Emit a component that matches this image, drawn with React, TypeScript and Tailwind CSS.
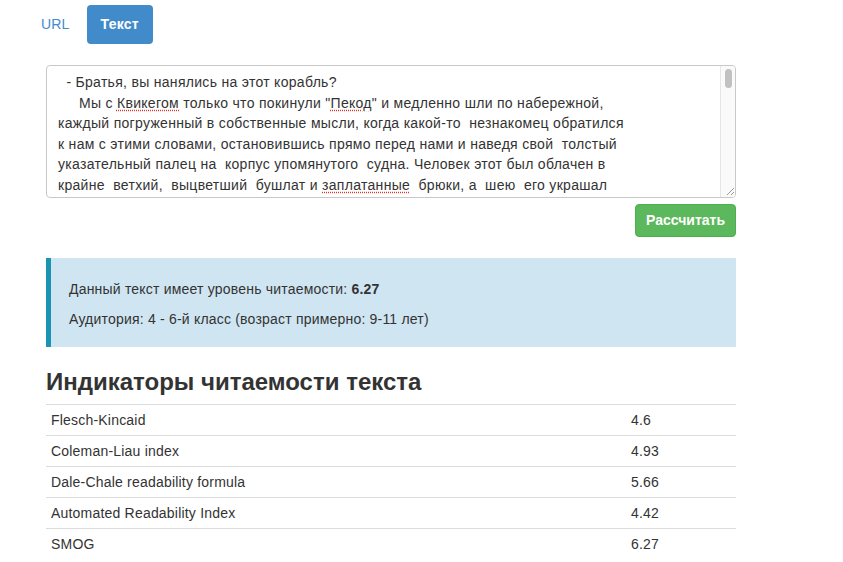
const lines = [
  "  - Братья, вы нанялись на этот корабль?",
  "     Мы с Квикегом только что покинули \"Пекод\" и медленно шли по набережной,",
  "каждый погруженный в собственные мысли, когда какой-то  незнакомец обратился",
  "к нам с этими словами, остановившись прямо перед нами и наведя свой  толстый",
  "указательный палец на  корпус упомянутого  судна. Человек этот был облачен в",
  "крайне  ветхий,  выцветший  бушлат и заплатанные  брюки, а  шею  его украшал",
  "обрывок черного платка. Он был рябой от оспы, а на лице",
];

const misspelled = ["Квикегом", "Пекод", "заплатанные"];

const renderLine = (line: string) => {
  const parts = line.split(/(Квикегом|Пекод|заплатанные)/);
  return parts.map((p, i) =>
    misspelled.includes(p) ? (
      <span key={i} className="underline decoration-dotted decoration-[#e0302a] underline-offset-2">
        {p}
      </span>
    ) : (
      <span key={i}>{p}</span>
    )
  );
};

const indicators = [
  { name: "Flesch-Kincaid", value: "4.6" },
  { name: "Coleman-Liau index", value: "4.93" },
  { name: "Dale-Chale readability formula", value: "5.66" },
  { name: "Automated Readability Index", value: "4.42" },
  { name: "SMOG", value: "6.27" },
];

const App = () => {
  return (
    <div
      className="w-[843px] h-[562px] overflow-hidden bg-white text-[#333] text-[14px] tracking-[0.2px]"
      style={{ fontFamily: '"Liberation Sans", Arial, sans-serif' }}
    >
      <ul className="flex pl-[26px] pt-[5px]">
        <li>
          <a className="block px-[15px] h-[39px] leading-[39px] text-[#428bca] rounded">URL</a>
        </li>
        <li className="ml-[2px]">
          <a className="block px-[14px] h-[39px] leading-[39px] bg-[#428bca] text-white font-bold rounded">
            Текст
          </a>
        </li>
      </ul>

      <div className="ml-[46px] w-[690px]">
        <div className="mt-[21px] h-[133px] border border-[#c8c8c8] rounded-[4px] flex overflow-hidden">
          <div className="flex-1 pl-[11px] pt-[6px] overflow-hidden leading-[20.5px] whitespace-pre text-[#333] tracking-[0.3px]">
            {lines.map((l, i) => (
              <div key={i}>{renderLine(l)}</div>
            ))}
          </div>
          <div className="w-[15px] border-l border-[#e6e6e6] bg-[#fafafa] flex flex-col items-center pt-[3px]">
            <div className="w-[7px] h-[19px] rounded-full bg-[#c1c1c1]" />
            <div className="flex-1" />
            <svg width="10" height="10" viewBox="0 0 10 10" className="mb-[1px] self-end">
              <path d="M9 2 L2 9 M9 6 L6 9" stroke="#999" strokeWidth="1" />
            </svg>
          </div>
        </div>

        <div className="flex justify-end mt-[6px]">
          <button className="w-[101px] h-[33px] bg-[#5cb85c] border border-[#4cae4c] rounded-[4px] text-white font-bold tracking-normal">
            Рассчитать
          </button>
        </div>

        <div className="mt-[21px] h-[89px] bg-[#cfe5f2] border-l-[5px] border-[#1a94b2] pl-[18px] pt-[21px]">
          <p className="leading-[20px]">
            Данный текст имеет уровень читаемости: <b>6.27</b>
          </p>
          <p className="leading-[20px] mt-[10px]">Аудитория: 4 - 6-й класс (возраст примерно: 9-11 лет)</p>
        </div>

        <h2 className="mt-[21px] text-[24px] leading-[28px] font-bold tracking-normal text-[#333]">
          Индикаторы читаемости текста
        </h2>

        <table className="w-full mt-[8px] border-collapse">
          <tbody>
            {indicators.map((r) => (
              <tr key={r.name} className="border-t border-[#ddd]">
                <td className="h-[31px] pl-[5px] w-[580px]">{r.name}</td>
                <td className="h-[31px] pl-[5px]">{r.value}</td>
              </tr>
            ))}
          </tbody>
        </table>
      </div>
    </div>
  );
};

export default App;
